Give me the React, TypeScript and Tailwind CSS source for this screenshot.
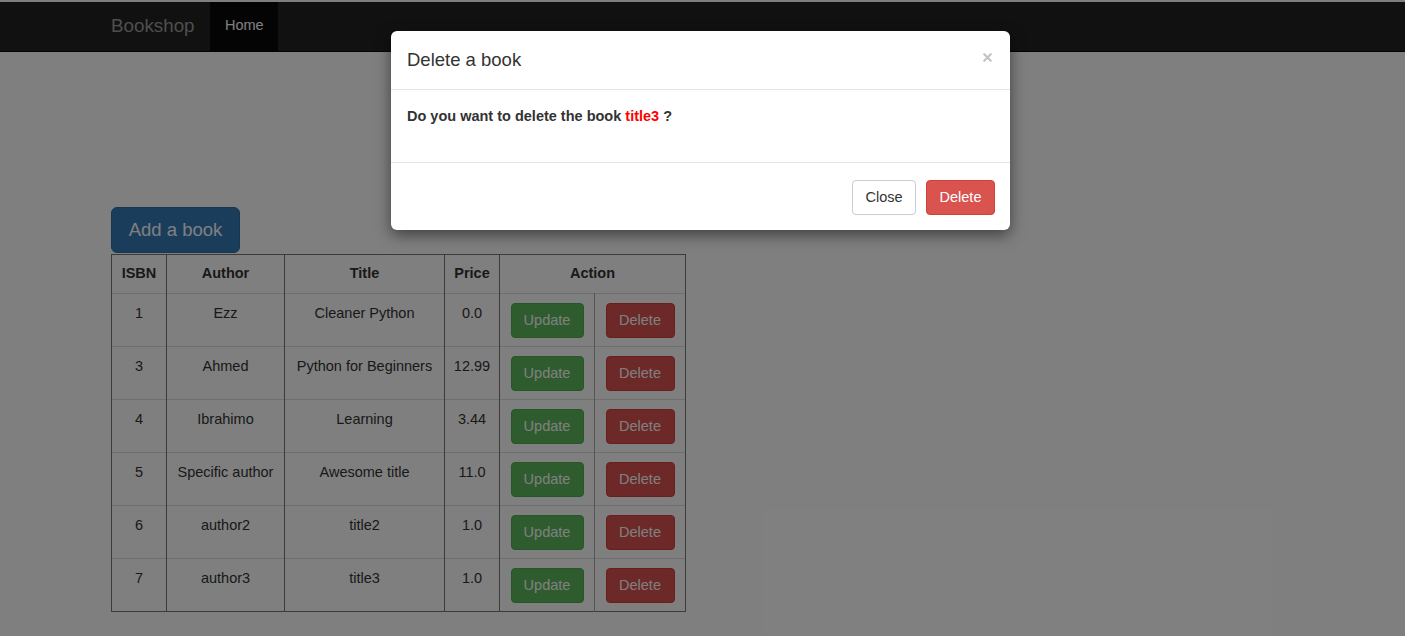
import { X } from 'lucide-react'

interface Book {
  isbn: string
  author: string
  title: string
  price: string
}

const books: Book[] = [
  { isbn: '1', author: 'Ezz', title: 'Cleaner Python', price: '0.0' },
  { isbn: '3', author: 'Ahmed', title: 'Python for Beginners', price: '12.99' },
  { isbn: '4', author: 'Ibrahimo', title: 'Learning', price: '3.44' },
  { isbn: '5', author: 'Specific author', title: 'Awesome title', price: '11.0' },
  { isbn: '6', author: 'author2', title: 'title2', price: '1.0' },
  { isbn: '7', author: 'author3', title: 'title3', price: '1.0' },
]

function BookRow({ book }: { book: Book }) {
  return (
    <tr className="h-[53px] border-t border-[#ddd]">
      <td className="border-x border-[#777] px-1 pt-[9px] align-top">{book.isbn}</td>
      <td className="border-x border-[#777] px-1 pt-[9px] align-top">{book.author}</td>
      <td className="border-x border-[#777] px-1 pt-[9px] align-top">{book.title}</td>
      <td className="border-x border-[#777] px-1 pt-[9px] align-top">{book.price}</td>
      <td className="border-l border-[#777] border-r border-r-[#aaa] px-0 pt-[9px] align-top">
        <button className="h-[35px] w-[73px] rounded-[4px] border border-[#4cae4c] bg-[#5cb85c] text-white">
          Update
        </button>
      </td>
      <td className="border-x border-[#777] px-0 pt-[9px] align-top">
        <button className="h-[35px] w-[69px] rounded-[4px] border border-[#d43f3a] bg-[#d9534f] text-white">
          Delete
        </button>
      </td>
    </tr>
  )
}

export default function App() {
  return (
    <div
      className="flex h-[636px] w-[1409px] overflow-hidden bg-white text-[14.5px] text-[#333]"
      style={{ fontFamily: '"Liberation Sans", Arial, sans-serif' }}
    >
      <div className="relative h-[636px] w-[1405px] bg-white">
        <div className="h-[2px]" />
        {/* NAVBAR */}
        <nav className="h-[50px] border-b border-[#080808] bg-[#222]">
          <div className="ml-[96px] flex h-full">
            <a className="w-[114px] px-[15px] py-[13px] text-[18.8px] leading-[22px] text-[#9d9d9d]">Bookshop</a>
            <a className="w-[68px] bg-[#080808] px-[15px] py-[13px] text-[14.5px] leading-[20px] text-white">Home</a>
          </div>
        </nav>

        {/* CONTENT */}
        <div className="ml-[111px] pt-[155px]">
          <button className="h-[46px] w-[129px] rounded-[6px] border border-[#2e6da4] bg-[#337ab7] text-[18.5px] text-white">
            Add a book
          </button>
          <table className="mt-px w-[574px] table-fixed border-collapse border border-[#777] text-center">
            <colgroup>
              <col className="w-[55px]" />
              <col className="w-[118px]" />
              <col className="w-[160px]" />
              <col className="w-[55px]" />
              <col className="w-[95px]" />
              <col className="w-[91px]" />
            </colgroup>
            <thead>
              <tr className="h-[39px]">
                <th className="border-x border-[#777] font-bold">ISBN</th>
                <th className="border-x border-[#777] font-bold">Author</th>
                <th className="border-x border-[#777] font-bold">Title</th>
                <th className="border-x border-[#777] font-bold">Price</th>
                <th colSpan={2} className="border-x border-[#777] font-bold">
                  Action
                </th>
              </tr>
            </thead>
            <tbody>
              {books.map((book) => (
                <BookRow key={book.isbn} book={book} />
              ))}
            </tbody>
          </table>
        </div>

        {/* BACKDROP */}
        <div className="absolute inset-0 bg-black/50" />

        {/* MODAL */}
        <div className="absolute left-[391px] top-[31px] w-[619px] rounded-[6px] bg-white shadow-[0_5px_15px_rgba(0,0,0,0.5)]">
          <div className="flex h-[59px] items-center justify-between border-b border-[#e5e5e5] px-[16px]">
            <h4 className="text-[18.5px] text-[#333]">Delete a book</h4>
            <X className="-mt-[6px] h-[13px] w-[13px] text-[#c2c2c2]" strokeWidth={4} />
          </div>
          <div className="h-[73px] border-b border-[#e5e5e5] px-[16px] pt-[16px]">
            <p className="text-[14.5px] font-bold leading-[20px] text-[#333]">
              Do you want to delete the book <span className="text-[#ff0000]">title3</span> ?
            </p>
          </div>
          <div className="flex h-[67px] items-center justify-end gap-[10px] pr-[15px]">
            <button className="mt-[2px] h-[35px] w-[64px] rounded-[4px] border border-[#ccc] bg-white text-[14.5px] text-[#333]">
              Close
            </button>
            <button className="mt-[2px] h-[35px] w-[69px] rounded-[4px] border border-[#d43f3a] bg-[#d9534f] text-[14.5px] text-white">
              Delete
            </button>
          </div>
        </div>
      </div>
      <div className="h-[636px] w-[4px] bg-white" />
    </div>
  )
}
